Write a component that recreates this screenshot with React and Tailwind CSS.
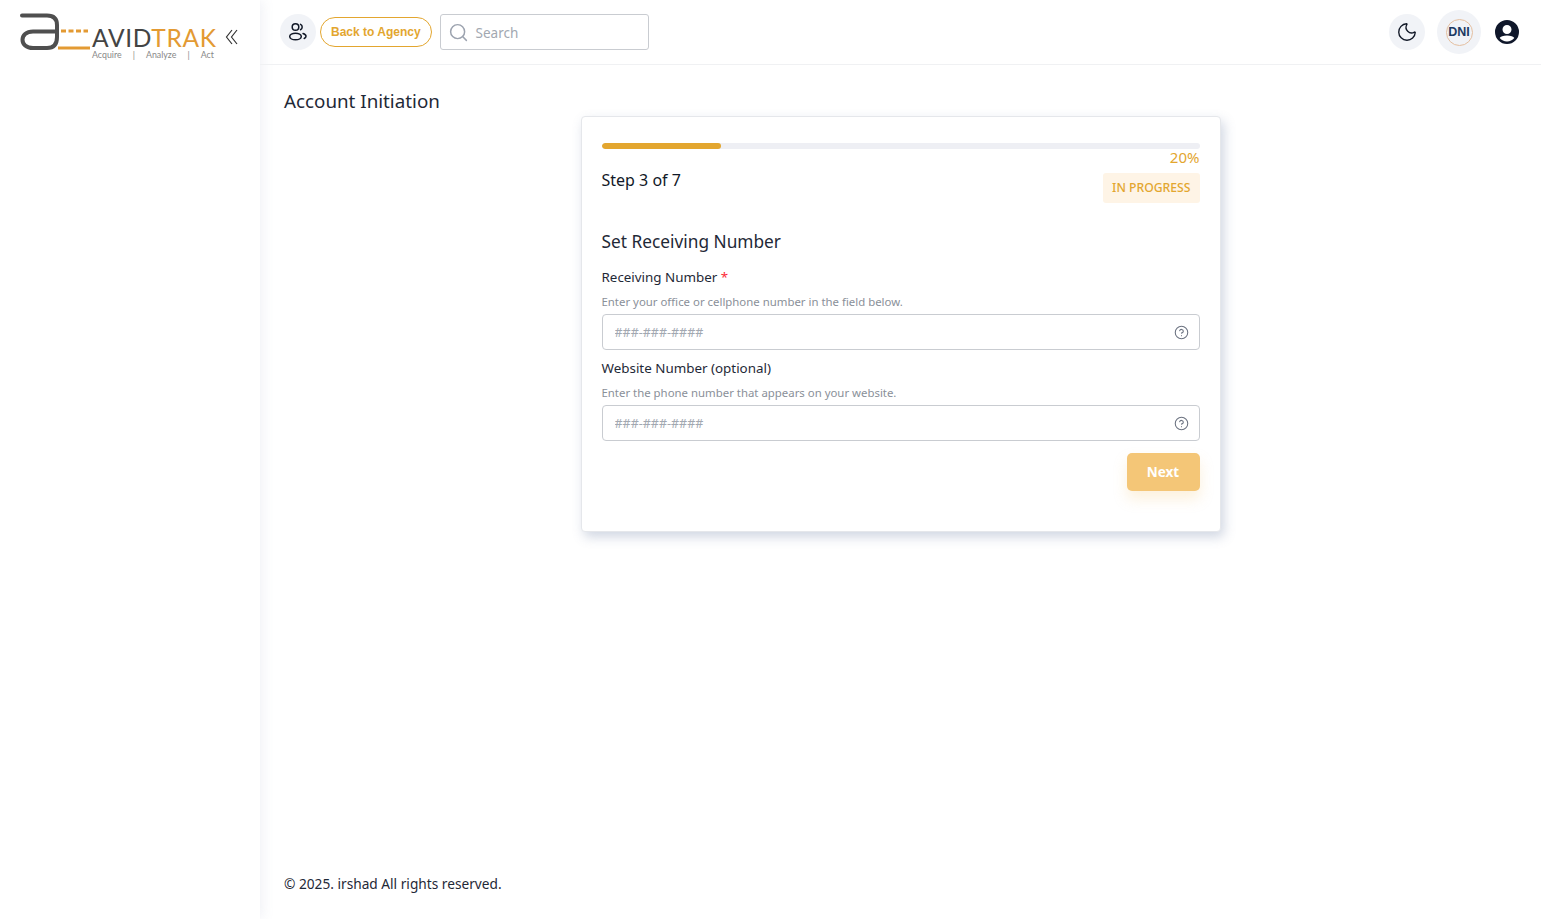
import React from 'react';
import { Search, Moon, CircleHelp } from 'lucide-react';

const Logo = () => (
    <div className="relative w-[198px] h-[48px] shrink-0">
        <svg className="absolute left-0 top-0" width="72" height="38" viewBox="0 0 72 38" fill="none">
            <path d="M38 36C41 36 45 36 70 36" stroke="#e39a33" strokeWidth="3" />
            <path d="M41 19H68" stroke="#e39a33" strokeWidth="3" strokeDasharray="5 2.500" />
            <path d="M2 3.500H27Q37 3.500 37 13V25Q37 36 27 36H13C-1 36 -1 19.500 13 19.500H37" stroke="#4f4f4f" strokeWidth="4" strokeLinecap="round" />
        </svg>
        <div className="absolute left-[72px] top-[14px] text-[24.500px] leading-[24px] tracking-[0.7px] font-['Lato',sans-serif] font-normal text-[#444] whitespace-nowrap">
            AVID<span className="text-[#e39a33]">TRAK</span>
        </div>
        <div className="absolute left-[72px] top-[38px] w-[122px] flex justify-between text-[8.800px] leading-[10px] text-[#888] font-['Lato',sans-serif]">
            <span>Acquire</span><span>|</span><span>Analyze</span><span>|</span><span>Act</span>
        </div>
    </div>
);

const TeamIcon = () => (
    <svg width="20" height="20" viewBox="0 0 20 20" fill="none" stroke="#111827" strokeWidth="1.500" strokeLinecap="round">
        <circle cx="7.500" cy="5" r="3.300" />
        <ellipse cx="7.500" cy="14.500" rx="5.800" ry="3.300" />
        <path d="M12.500 2.300a3 3 0 0 1 0 5.400" />
        <path d="M15 11.500c2 .6 3 1.600 3 2.800s-.8 1.800-1.800 2.200" />
    </svg>
);

const Field = ({ label, required, hint }) => (
    <div className="mb-[8px]">
        <div className="text-[13.400px] leading-[20px] text-[#1f2937]">
            {label} {required && <span className="text-red-500">*</span>}
        </div>
        <div className="mt-[7px] text-[11.400px] leading-[16px] text-[#8a9099]">{hint}</div>
        <div className="mt-[4px] h-[36px] flex items-center justify-between pl-[12px] pr-[10px] border border-[#c9ccd1] rounded-[4px]">
            <input className="flex-1 pt-[2px] outline-none bg-transparent text-[12.500px] placeholder:text-[#a2a8b1]" placeholder="###-###-####" />
            <CircleHelp size={15} strokeWidth={1.700} className="text-[#6b7280]" />
        </div>
    </div>
);

const App = () => {
    return (
        <div className="flex min-h-[919px] h-screen bg-white overflow-hidden font-['Noto_Sans',sans-serif] text-[#111827]">
            <aside className="w-[260px] shrink-0 flex items-start justify-between pl-[20px] pr-[21px] pt-[12px] bg-white shadow-[2px_0_12px_rgba(120,130,170,0.12)]">
                <Logo />
                <svg className="mt-[17px]" width="14" height="16" viewBox="0 0 14 16" fill="none" stroke="#333" strokeWidth="1.200">
                    <path d="M7 1L1.500 8L7 15" />
                    <path d="M12 1L6.500 8L12 15" />
                </svg>
            </aside>

            <div className="flex-1 flex flex-col min-w-0">
                <header className="h-[65px] shrink-0 flex items-center justify-between pl-[20px] pr-[22px] border-b border-[#f0f1f3]">
                    <div className="flex items-center">
                        <div className="w-[36px] h-[36px] rounded-full bg-[#f1f3f7] flex items-center justify-center">
                            <TeamIcon />
                        </div>
                        <button className="ml-[4px] h-[30px] px-[10px] rounded-full border border-[#e3a62f] text-[12px] font-bold text-[#e3a62f] font-['Liberation_Sans',sans-serif]">
                            Back to Agency
                        </button>
                        <div className="ml-[8px] w-[209px] h-[36px] flex items-center pl-[7px] border border-[#c9ccd1] rounded-[3px]">
                            <Search size={21} strokeWidth={1.700} className="text-[#9ca3af]" />
                            <span className="ml-[7px] pt-[3px] text-[13.500px] text-[#a2a8b1]">Search</span>
                        </div>
                    </div>
                    <div className="flex items-center">
                        <div className="w-[36px] h-[36px] rounded-full bg-[#f1f3f7] flex items-center justify-center">
                            <Moon size={22} strokeWidth={1.500} className="text-[#111827]" />
                        </div>
                        <div className="ml-[12px] w-[44px] h-[44px] rounded-full bg-[#f1f3f7] flex items-center justify-center">
                            <div className="w-[27px] h-[27px] rounded-full border border-[#e4bfa0] flex items-center justify-center text-[12.500px] font-black text-[#1d3a63] font-['Liberation_Sans',sans-serif]">
                                DNI
                            </div>
                        </div>
                        <svg className="ml-[14px]" width="24" height="24" viewBox="0 0 24 24" fill="#0f172a">
                            <path d="M12 0a12 12 0 1 0 0 24 12 12 0 0 0 0-24zm0 5a4.500 4.500 0 1 1 0 9 4.500 4.500 0 0 1 0-9zm0 16.500a9.500 9.500 0 0 1-7.300-3.400c.6-1.500 3.700-2.600 7.300-2.600s6.700 1.100 7.300 2.600a9.500 9.500 0 0 1-7.300 3.400z" />
                        </svg>
                    </div>
                </header>

                <main className="flex-1 flex flex-col px-[24px] pt-[22px]">
                    <h1 className="text-[18.800px] leading-[29px] text-[#1f2937]">Account Initiation</h1>
                    <div className="mx-auto w-[640px] h-[416px] px-[20px] pt-[26px] bg-white border border-[#e5e7eb] rounded-[4px] shadow-[3px_5px_12px_rgba(100,120,160,0.3)]">
                        <div className="h-[6px] rounded-full bg-[#eeeff4] overflow-hidden">
                            <div className="h-full w-[20%] rounded-full bg-[#e3a62f]" />
                        </div>
                        <div className="-mt-[1px] mb-[1px] text-right text-[15px] leading-[18px] text-[#e3a62f]">20%</div>
                        <div className="flex items-start justify-between">
                            <div className="mt-[1px] text-[16px] leading-[24px] text-[#111827]">Step 3 of 7</div>
                            <div className="mt-[6px] h-[30px] px-[9px] flex items-center bg-[#fef4e6] rounded-[3px] text-[12.200px] font-medium text-[#e3a62f]">IN PROGRESS</div>
                        </div>
                        <h2 className="mt-[27px] mb-[13px] text-[17.300px] leading-[24px] text-[#1f2937]">Set Receiving Number</h2>
                        <Field label="Receiving Number" required hint="Enter your office or cellphone number in the field below." />
                        <Field label="Website Number (optional)" hint="Enter the phone number that appears on your website." />
                        <div className="flex justify-end mt-[12px]">
                            <button className="w-[73px] h-[38px] rounded-[5px] bg-[#f4c677] text-white text-[13.500px] font-bold shadow-[0_8px_14px_rgba(244,198,119,0.25)]">Next</button>
                        </div>
                    </div>
                    <footer className="mt-auto mb-[25px] text-[13.700px] leading-[20px] text-[#1f2937]">© 2025. irshad All rights reserved.</footer>
                </main>
            </div>
        </div>
    );
};

export default App;
